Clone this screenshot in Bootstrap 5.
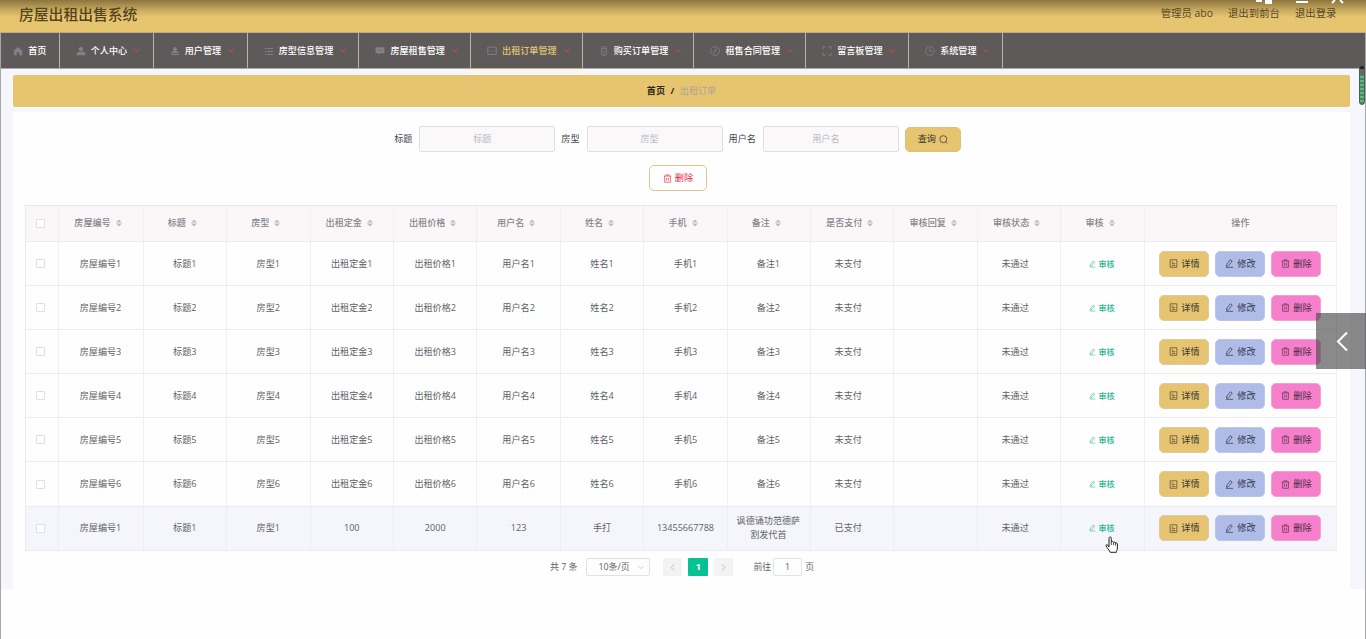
<!DOCTYPE html>
<html lang="zh-CN">
<head>
<meta charset="utf-8">
<meta name="viewport" content="width=device-width, initial-scale=1">
<title>房屋出租出售系统</title>
<link href="https://cdn.jsdelivr.net/npm/bootstrap@5.3.0/dist/css/bootstrap.min.css" rel="stylesheet">
<style>
  :root { --gold: #e6c470; }
  body { font-family: "Open Sans", "Noto Sans CJK SC", sans-serif; font-size: 9.1px; line-height: 14px; color: #606266; background: #fefefe; height: 639px; overflow: hidden; }
  svg { display: block; flex: none; }
  .ico { width: 10px; height: 10px; fill: none; stroke: currentColor; stroke-width: 1; }
  .screen { height: 639px; border-left: 1px solid #a5a5aa; border-right: 1px solid #a5a5aa; }
  .topbar { height: 33px; margin: 0 -1px; padding: 0 29.5px 0 19px; color: #52441f; background: linear-gradient(#8b7440 0, #a38949 4px, #c7a95f 10px, var(--gold) 17px); border-bottom: 1px solid #b9ac92; }
  .sys-title { font-size: 14.8px; line-height: 28px; font-weight: 500; }
  .user-links { font-size: 10.4px; line-height: 27px; gap: 15px; color: #574a28; }
  .mainnav { height: 36px; background: #5e5a59; border-bottom: 1px solid #aaa; }
  .mainnav .menu { padding: 0 0 0 16px; border-right: 1px solid #b4b2b3; color: #fff; font-weight: 500; white-space: nowrap; width: 111.7px; height: 35px; }
  .mainnav .w4 { width: 94px; }
  .mainnav .w5 { width: 103px; }
  .mainnav .home { width: 58.5px; padding-left: 12px; }
  .mainnav .ico { color: #858087; margin-right: 5.2px; }
  .mainnav .arrow { width: 7px; height: 5px; margin: 0 0 1px 6px; fill: none; stroke: #b34a5c; stroke-width: 1.1; overflow: visible; }
  .mainnav .current { color: #e4c36f; height: 36px; padding-bottom: 1px; box-shadow: inset 0 -1px #d5af5b; }
  .page-body { background: #f6f7fc; height: 520px; padding: 6px 15px 0 12px; }
  .crumbs { height: 32px; background: var(--gold); border-radius: 2px; color: #302a1a; gap: 5.5px; }
  .crumbs b { font-weight: 700; }
  .crumbs .here { color: #aaa69a; }
  .panel { background: #fefefe; height: 477px; margin-top: 5px; padding: 14px 13px 0 12px; }
  .filters { height: 26px; color: #45474b; margin-left: -7px; }
  .filters label { margin-right: 7px; }
  .filters .form-control { height: 26px; width: 136px; padding: 0 10px 1px 0; margin-right: 6px; font-size: 9.1px; line-height: 23px; text-align: center; background: #fbf8fa; border: 1px solid #dfdfe5; border-radius: 2px; }
  .filters .form-control::placeholder { color: #b9bac6; opacity: 1; }
  .btn { --bs-btn-padding-x: 0; --bs-btn-padding-y: 0; --bs-btn-font-size: 9.2px; --bs-btn-line-height: 14px; display: flex; align-items: center; justify-content: center; gap: 3px; height: 25px; border-radius: 5px; color: #383630; }
  .btn .ico { width: 9px; height: 9px; }
  .btn-find { width: 56px; background: var(--gold); border-color: #e0c079; }
  .btn-wipe { width: 58px; height: 26px; color: #e02a3c; border-color: #dfc68c; background: #fff; margin: 13px 6px 0 0; }
  .act { width: 50px; height: 26px; border-color: #d9cba8; }
  .act-view { background: var(--gold); }
  .act-edit { background: #b0bce8; border-color: #bcc6e9; color: #35384a; }
  .act-del { background: #f67fcb; border-color: #f3a0d5; color: #4c2a40; }
  .orders { width: 1312px; table-layout: fixed; margin: 14px 0 0 0; border-collapse: separate; border-spacing: 0; border-left: 1px solid #ebebf1; border-top: 1px solid #e7e5ea; }
  .orders th, .orders td { padding: 0; text-align: center; vertical-align: middle; border-right: 1px solid #eeeef3; border-bottom: 1px solid #ebebf1; }
  .orders th { height: 36px; background: #fbf7f9; color: #84868b; font-weight: 500; padding-bottom: 1px; }
  .orders td { height: 44.1px; }
  .orders tr.hovered td { background: #f5f6fc; }
  .orders .inner { display: flex; align-items: center; justify-content: center; }
  .orders th .inner { padding-right: 5px; }
  .orders td.state { padding-right: 8px; }
  .tick { width: 9px; height: 9px; border: 1px solid #dfe0e6; border-radius: 1px; background: #fff; margin: 0 auto 0 10px; }
  .sorter { width: 6px; height: 8px; margin-left: 5px; fill: #bbbcc3; }
  .audit { color: #1fb491; font-size: 8px; gap: 3px; padding-right: 2px; font-weight: 500; }
  .audit .ico { width: 7px; height: 8px; }
  .orders td.memo { padding: 0 9px 0 8px; }
  .pager { height: 19px; margin-top: 7px; margin-left: 2px; font-size: 8.9px; }
  .pg-size { width: 64px; height: 18px; border: 1px solid #dfe1e7; border-radius: 2px; padding: 0 5px 0 11px; margin: 0 13px 0 9px; }
  .pg-btn { width: 19px; height: 18px; background: #f3f3f6; color: #b9bbc2; border-radius: 1px; }
  .pg-on { background: #06c192; color: #fff; font-weight: 700; width: 20px; margin: 0 6px; }
  .pg-jump { width: 29px; height: 18px; border: 1px solid #e2e3e9; border-radius: 2px; margin: 0 3px 0 2px; }
  .drawer-tab { position: absolute; left: 1316px; top: 313px; width: 50px; height: 56px; background: rgba(75,75,75,.65); }
  .scroll-mark { position: absolute; left: 1359px; top: 65px; width: 6px; height: 40px; border-radius: 3px; border: 1px solid #4c5c5a; background: linear-gradient(#222 3px, #686866 3px, #686866 9px, transparent 9px), repeating-linear-gradient(#3f8d5b 0 2px, #66b580 2px 4px); }
  .win-ctl { position: absolute; left: 1256px; top: 0; }
  .pointer { position: absolute; left: 1105px; top: 536px; }
</style>
</head>
<body>
<svg class="d-none">
  <symbol id="i-home" viewBox="0 0 10 10"><path d="M.7 5 5 1l4.300 4v4.200H6.300V6.300H3.700v2.900H.9V5z" fill="currentColor" stroke="none"/></symbol>
  <symbol id="i-user" viewBox="0 0 10 10"><path d="M5 .8a2.300 2.300 0 0 1 2.200 2.400C7.200 4.500 6.300 5.400 5 5.400S2.800 4.500 2.800 3.200A2.300 2.300 0 0 1 5 .8zM.7 9.200V7.600C.7 6.500 1.600 6 3 6h4c1.400 0 2.300.5 2.300 1.600v1.600z" fill="currentColor" stroke="none"/></symbol>
  <symbol id="i-stamp" viewBox="0 0 10 10"><path d="M5 1a2 2 0 0 1 1.900 2c0 1-.7 1.500-.7 2.600h2.400v1.700H1.400V5.600h2.400C3.800 4.500 3.100 4 3.100 3A2 2 0 0 1 5 1zM1 8h8v1H1z" fill="currentColor" stroke="none"/></symbol>
  <symbol id="i-list" viewBox="0 0 10 10"><path d="M.8 2.500h1.500M3.200 2.500h6M.8 5.500h1.500M3.200 5.500h6M.8 8.500h1.500M3.200 8.500h6"/></symbol>
  <symbol id="i-chat" viewBox="0 0 10 10"><path d="M.6 1.200h8.800v6H4.600L3 9V7.200H.6z" fill="currentColor" stroke="none"/><path d="M2.500 4.200h1M4.500 4.200h1M6.500 4.200h1" stroke="#5e5a59"/></symbol>
  <symbol id="i-msg" viewBox="0 0 10 10"><path d="M.8 1.200h8.400v7.300H.8zM2.500 5h1M4.500 5h1M6.500 5h1" stroke-width=".9"/></symbol>
  <symbol id="i-phone" viewBox="0 0 10 10"><rect x="2.800" y=".7" width="4.500" height="8.600" rx=".7" stroke-width=".9"/><path d="M3 2.500h4M5 3.500v3M4.300 8h1.500" stroke-width=".7"/></symbol>
  <symbol id="i-compass" viewBox="0 0 10 10"><circle cx="5" cy="5" r="4.400" stroke-width=".8"/><path d="M6.700 3 5.500 5.500 3.300 7l1.200-2.500z" stroke-width=".7"/></symbol>
  <symbol id="i-full" viewBox="0 0 10 10"><path d="M3.500.8H1v2.500M6.500.8H9v2.500M3.500 9.200H1V6.700M6.500 9.200H9V6.700" stroke-width=".9"/></symbol>
  <symbol id="i-clock" viewBox="0 0 10 10"><circle cx="5" cy="5" r="4.400" stroke-width=".8"/><path d="M4.800 2.400v2.900h2.800" stroke-width=".8"/></symbol>
  <symbol id="i-find" viewBox="0 0 10 10"><circle cx="4.800" cy="4.600" r="3.900" stroke-width=".8"/><path d="m7.500 7.500 1.700 1.900" stroke-width=".8"/></symbol>
  <symbol id="i-trash" viewBox="0 0 10 10"><path d="M.8 2.300h8.400M3.400 2.200V.9h3.200v1.300M1.800 2.300v6.900h6.400V2.300M4 4.200v3.200M6 4.200v3.200" stroke-width=".7"/></symbol>
  <symbol id="i-doc" viewBox="0 0 10 10"><path d="M1.300.9h7.400v8.300H1.300zM3 3.400h2M3 5.200h4M3 7.200h4" stroke-width=".7"/></symbol>
  <symbol id="i-pen" viewBox="0 0 10 10"><path d="m2 5.700 4-4.900 2 1.500-4 5-2.300.9zM1 9.300h8" stroke-width=".8"/></symbol>
  <symbol id="i-sort" viewBox="0 0 6 8"><path d="m0 3.400 3-3 3 3zM0 4.600l3 3 3-3z"/></symbol>
</svg>

<div class="screen">
  <header class="topbar d-flex justify-content-between align-items-start">
    <div class="sys-title">房屋出租出售系统</div>
    <div class="user-links d-flex"><span>管理员 abo</span><span>退出到前台</span><span>退出登录</span></div>
  </header>
  <nav class="mainnav d-flex">
    <div class="menu home d-flex align-items-center"><svg class="ico"><use href="#i-home"/></svg>首页</div>
    <div class="menu w4 d-flex align-items-center"><svg class="ico"><use href="#i-user"/></svg>个人中心<svg class="arrow" viewBox="0 0 7 5"><path d="M.6.8l2.900 3 2.900-3"/></svg></div>
    <div class="menu w4 d-flex align-items-center"><svg class="ico"><use href="#i-stamp"/></svg>用户管理<svg class="arrow" viewBox="0 0 7 5"><path d="M.6.8l2.900 3 2.900-3"/></svg></div>
    <div class="menu d-flex align-items-center"><svg class="ico"><use href="#i-list"/></svg>房型信息管理<svg class="arrow" viewBox="0 0 7 5"><path d="M.6.8l2.900 3 2.900-3"/></svg></div>
    <div class="menu d-flex align-items-center"><svg class="ico"><use href="#i-chat"/></svg>房屋租售管理<svg class="arrow" viewBox="0 0 7 5"><path d="M.6.8l2.900 3 2.900-3"/></svg></div>
    <div class="menu current d-flex align-items-center"><svg class="ico"><use href="#i-msg"/></svg>出租订单管理<svg class="arrow" viewBox="0 0 7 5"><path d="M.6.8l2.900 3 2.900-3"/></svg></div>
    <div class="menu d-flex align-items-center"><svg class="ico"><use href="#i-phone"/></svg>购买订单管理<svg class="arrow" viewBox="0 0 7 5"><path d="M.6.8l2.900 3 2.900-3"/></svg></div>
    <div class="menu d-flex align-items-center"><svg class="ico"><use href="#i-compass"/></svg>租售合同管理<svg class="arrow" viewBox="0 0 7 5"><path d="M.6.8l2.900 3 2.900-3"/></svg></div>
    <div class="menu w5 d-flex align-items-center"><svg class="ico"><use href="#i-full"/></svg>留言板管理<svg class="arrow" viewBox="0 0 7 5"><path d="M.6.8l2.900 3 2.900-3"/></svg></div>
    <div class="menu w4 d-flex align-items-center"><svg class="ico"><use href="#i-clock"/></svg>系统管理<svg class="arrow" viewBox="0 0 7 5"><path d="M.6.8l2.900 3 2.900-3"/></svg></div>
  </nav>
  <main class="page-body">
    <div class="crumbs d-flex align-items-center justify-content-center"><b>首页</b><b>/</b><span class="here">出租订单</span></div>
    <section class="panel">
      <form class="filters d-flex align-items-center justify-content-center">
        <label>标题</label><input class="form-control" placeholder="标题">
        <label>房型</label><input class="form-control" placeholder="房型">
        <label>用户名</label><input class="form-control" placeholder="用户名">
        <button type="button" class="btn btn-find">查询<svg class="ico"><use href="#i-find"/></svg></button>
      </form>
      <div class="d-flex justify-content-center"><button type="button" class="btn btn-wipe"><svg class="ico"><use href="#i-trash"/></svg>删除</button></div>
      <table class="orders">
        <colgroup id="cols"></colgroup>
        <thead><tr id="head"></tr></thead>
        <tbody id="rows"></tbody>
      </table>
      <div class="pager d-flex align-items-center justify-content-center">
        <span>共 7 条</span>
        <div class="pg-size d-flex align-items-center justify-content-between"><span>10条/页</span><svg width="6" height="5" viewBox="0 0 7 5" fill="none" stroke="#c0c4cc"><path d="M.6.8l2.900 3 2.900-3"/></svg></div>
        <div class="pg-btn d-flex align-items-center justify-content-center"><svg width="5" height="7" viewBox="0 0 5 7" fill="none" stroke="currentColor"><path d="M4 .5 1 3.500l3 3"/></svg></div>
        <div class="pg-btn pg-on d-flex align-items-center justify-content-center">1</div>
        <div class="pg-btn d-flex align-items-center justify-content-center"><svg width="5" height="7" viewBox="0 0 5 7" fill="none" stroke="currentColor"><path d="m1 .5 3 3-3 3"/></svg></div>
        <span class="ms-3 ps-1">前往</span>
        <div class="pg-jump d-flex align-items-center justify-content-center">1</div>
        <span>页</span>
      </div>
    </section>
  </main>
</div>

<svg class="win-ctl" width="92" height="5" fill="none" stroke="#fff" stroke-width="2"><path d="M0 1h6"/><path d="M9 0h7v4H9z" fill="#fff" stroke="none"/><path d="M40 2h12M76 3l3-3M84 0l3 3"/></svg>
<div class="scroll-mark"></div>
<div class="drawer-tab"><svg width="50" height="56" fill="none" stroke="#fff" stroke-width="2"><path d="m31 19.500-9 9 9 9"/></svg></div>
<svg class="pointer" width="14" height="18" viewBox="0 0 14 18"><path d="M4 11V2.300C4 .5 6.300.5 6.300 2.300V6c.3-.8 2-.7 2.200.4.500-.7 1.900-.4 2 .6.700-.5 1.900 0 1.900 1v4c0 2-1 2.700-1 4.300H5.200C5 14.800 1.500 11.500 1 9.700.7 8.600 2 8.200 2.700 9z" fill="#fff" stroke="#222"/><path d="M6.300 6v3M8.500 6.500v2.700M10.500 7v2.500" stroke="#222" stroke-width=".8"/></svg>

<script>
  const icon = n => `<svg class="ico"><use href="#i-${n}"/></svg>`;
  const widths = [32.5, 85, 83.5, 83.5, 83.5, 83.4, 83.4, 83.5, 83.4, 83.4, 83.4, 83.4, 83.5, 83.5, 192];
  document.getElementById('cols').innerHTML = widths.map(w => `<col style="width:${w}px">`).join('');

  const titles = ['房屋编号', '标题', '房型', '出租定金', '出租价格', '用户名', '姓名', '手机', '备注', '是否支付', '审核回复', '审核状态', '审核'];
  document.getElementById('head').innerHTML = '<th><div class="tick"></div></th>' +
    titles.map(t => `<th><div class="inner">${t}<svg class="sorter"><use href="#i-sort"/></svg></div></th>`).join('') + '<th>操作</th>';

  const orders = [1, 2, 3, 4, 5, 6].map(n =>
    [...['房屋编号', '标题', '房型', '出租定金', '出租价格', '用户名', '姓名', '手机', '备注'].map(t => t + n), '未支付', '', '未通过']);
  orders.push(['房屋编号1', '标题1', '房型1', '100', '2000', '123', '手打', '13455667788', '讽德诵功范德萨割发代首', '已支付', '', '未通过']);
  document.getElementById('rows').innerHTML = orders.map((o, r) => `<tr${r === 6 ? ' class="hovered"' : ''}>
    <td><div class="tick"></div></td>${o.map((v, i) => `<td${i === 8 ? ' class="memo"' : i > 8 ? ' class="state"' : ''}>${v}</td>`).join('')}
    <td><div class="inner audit">${icon('pen')}审核</div></td>
    <td><div class="d-flex justify-content-center" style="gap:6px">
      <button class="btn act act-view">${icon('doc')}详情</button>
      <button class="btn act act-edit">${icon('pen')}修改</button>
      <button class="btn act act-del">${icon('trash')}删除</button></div></td></tr>`).join('');
</script>
<script src="https://cdn.jsdelivr.net/npm/bootstrap@5.3.0/dist/js/bootstrap.bundle.min.js"></script>
</body>
</html>
